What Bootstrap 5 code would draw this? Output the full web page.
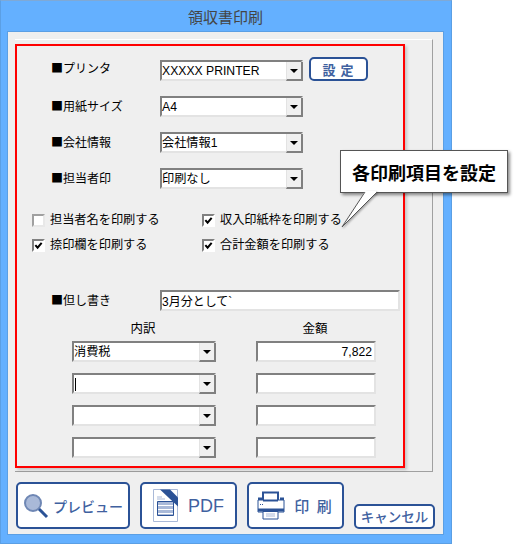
<!DOCTYPE html>
<html lang="ja">
<head>
    <meta charset="UTF-8">
    <meta name="viewport" content="width=device-width, initial-scale=1.0">
    <title>領収書印刷</title>
    <link href="https://cdn.jsdelivr.net/npm/bootstrap@5.3.0/dist/css/bootstrap.min.css" rel="stylesheet">
    <style>
        body {
            background: #fff;
            font-family: "Liberation Sans", "Noto Sans CJK JP", sans-serif;
            font-size: 12px;
            line-height: 1;
            color: #000;
        }
        .win {
            position: relative;
            width: 452px;
            height: 544px;
            background: #64b0ff;
            border: 1px solid #5b9fe4;
            border-top-color: #7fa9d6;
            padding: 0 7px 0 6px;
        }
        .win-title {
            height: 30px;
            font-family: "Noto Sans CJK JP", sans-serif;
            font-size: 15px;
            color: #444;
        }
        .client {
            height: 504px;
            background: #efefef;
            border: 1px solid #5b9fe4;
            padding: 7px 0 0 7px;
        }
        .frame {
            width: 418px;
            height: 433px;
            border-top: 1px solid #fff;
            border-right: 1px solid #a0a0a0;
            border-bottom: 1px solid #a0a0a0;
            padding-top: 4px;
        }
        .red-box {
            width: 390px;
            height: 424px;
            border: 2px solid #f00;
            box-shadow: 2px 2px 3px rgba(0, 0, 0, .18);
            padding-top: 14px;
        }
        .set-row { height: 21px; margin-bottom: 15px; padding-left: 34px; }
        .set-row-last { margin-bottom: 0; }
        .set-label { width: 109px; margin-top: 4px; font-family: "Noto Sans CJK JP", sans-serif; font-size: 12px; }
        .set-label-first { margin-top: 2px; }
        .combo {
            height: 21px;
            background: #fff;
            border-style: solid;
            border-width: 2px;
            border-color: #808080 #e3e3e3 #e3e3e3 #808080;
            padding-top: 2px;
            font-size: 12.2px;
        }
        .combo-wide { width: 143px; }
        .combo-small { width: 144px; }
        .combo-arrow {
            width: 17px;
            margin: -2px -2px -2px auto;
            background: #f0f0f0;
            border-right: 2px solid #808080;
            border-bottom: 2px solid #808080;
            border-left: 1px solid #e3e3e3;
        }
        .combo-arrow::after {
            content: "";
            border: 4px solid transparent;
            border-top: 4px solid #000;
            border-bottom: 0;
        }
        .caret-bar { width: 1px; height: 13px; margin-left: 1px; background: #000; }
        .btn-blue {
            background: #fff;
            border: 2px solid #2b5296;
            border-radius: 5px;
            color: #40619f;
            font-family: "Noto Sans CJK JP", sans-serif;
            font-weight: 500;
            padding: 0;
            line-height: 1;
        }
        .btn-blue:hover { background: #fff; border-color: #2b5296; color: #40619f; }
        .btn-set { width: 59px; height: 24px; margin: -3px 0 0 6px; font-size: 13px; font-weight: 700; letter-spacing: 1px; }
        .check-row { height: 12px; margin-bottom: 13px; padding-left: 15px; }
        .check-row-first { margin-top: 25px; }
        .check-col { width: 170px; }
        .check-col .form-check-input {
            width: 13px;
            height: 13px;
            margin: 0 5px 0 0;
            border: 2px solid;
            border-color: #a0a0a0 #e8e8e8 #e8e8e8 #a0a0a0;
            border-radius: 0;
            background-color: #fff;
            box-shadow: none;
            flex-shrink: 0;
        }
        .check-col .form-check-input:checked {
            background-color: #fff;
            border-color: #808080 #fff #fff #808080;
            background-size: 9px;
            background-image: url("data:image/svg+xml,%3csvg xmlns='http://www.w3.org/2000/svg' viewBox='0 0 10 10'%3e%3cpath fill='none' stroke='%23000' stroke-width='2.2' d='M1.500 4.500l2.500 3 4.500-5.500'/%3e%3c/svg%3e");
        }
        .check-text { margin-top: -2px; font-family: "Noto Sans CJK JP", sans-serif; font-size: 12.2px; }
        .note-row { height: 21px; margin-top: 39px; padding-left: 34px; }
        .note-box { width: 240px; font-size: 12px; }
        .head-row { margin-top: 9px; height: 21px; padding: 2px 0 0 54px; font-family: "Noto Sans CJK JP", sans-serif; font-size: 12.5px; }
        .head-left { width: 144px; margin-right: 40px; }
        .head-right { width: 120px; }
        .item-row { height: 21px; margin-bottom: 11px; padding-left: 55px; }
        .amount-box { width: 120px; margin-left: 40px; padding-right: 2px; }
        .foot { margin-top: 10px; padding-left: 1px; gap: 10px; align-items: flex-end; }
        .btn-big { height: 47px; font-size: 14px; gap: 4px; }
        .btn-preview { width: 114px; }
        .btn-pdf { width: 97px; font-family: "Liberation Sans", sans-serif; font-size: 18px; gap: 9px; }
        .btn-print { width: 97px; gap: 9px; font-size: 15px; letter-spacing: 2px; }
        .btn-cancel { width: 81px; height: 25px; font-size: 13.500px; }
        .callout {
            position: absolute;
            left: 339px;
            top: 149px;
            width: 168px;
            height: 43px;
            background: #fff;
            border: 1px solid #555;
            box-shadow: 2px 2px 3px rgba(0, 0, 0, .45);
            font-family: "Noto Sans CJK JP", sans-serif;
            font-weight: 700;
            font-size: 18px;
        }
        .callout-tail { position: absolute; left: 339px; top: 190px; filter: drop-shadow(1px 1px 1px rgba(0, 0, 0, .35)); }
    </style>
</head>
<body>
    <div class="win">
        <div class="win-title d-flex align-items-center justify-content-center">領収書印刷</div>
        <div class="client">
            <div class="frame">
                <div class="red-box">
                    <!-- プリンタ設定 -->
                    <div class="set-row d-flex">
                        <div class="set-label set-label-first">■プリンタ</div>
                        <div class="combo combo-wide d-flex align-items-center">
                            <span>XXXXX PRINTER</span>
                            <span class="combo-arrow align-self-stretch d-flex align-items-center justify-content-center"></span>
                        </div>
                        <button class="btn btn-blue btn-set" type="button">設 定</button>
                    </div>
                    <div class="set-row d-flex">
                        <div class="set-label">■用紙サイズ</div>
                        <div class="combo combo-wide d-flex align-items-center">
                            <span>A4</span>
                            <span class="combo-arrow align-self-stretch d-flex align-items-center justify-content-center"></span>
                        </div>
                    </div>
                    <div class="set-row d-flex">
                        <div class="set-label">■会社情報</div>
                        <div class="combo combo-wide d-flex align-items-center">
                            <span>会社情報1</span>
                            <span class="combo-arrow align-self-stretch d-flex align-items-center justify-content-center"></span>
                        </div>
                    </div>
                    <div class="set-row set-row-last d-flex">
                        <div class="set-label">■担当者印</div>
                        <div class="combo combo-wide d-flex align-items-center">
                            <span>印刷なし</span>
                            <span class="combo-arrow align-self-stretch d-flex align-items-center justify-content-center"></span>
                        </div>
                    </div>

                    <!-- チェック項目 -->
                    <div class="check-row check-row-first d-flex">
                        <label class="check-col d-flex align-items-center">
                            <input class="form-check-input" type="checkbox">
                            <span class="check-text">担当者名を印刷する</span>
                        </label>
                        <label class="check-col d-flex align-items-center">
                            <input class="form-check-input" type="checkbox" checked>
                            <span class="check-text">収入印紙枠を印刷する</span>
                        </label>
                    </div>
                    <div class="check-row d-flex">
                        <label class="check-col d-flex align-items-center">
                            <input class="form-check-input" type="checkbox" checked>
                            <span class="check-text">捺印欄を印刷する</span>
                        </label>
                        <label class="check-col d-flex align-items-center">
                            <input class="form-check-input" type="checkbox" checked>
                            <span class="check-text">合計金額を印刷する</span>
                        </label>
                    </div>

                    <!-- 但し書き -->
                    <div class="note-row d-flex">
                        <div class="set-label">■但し書き</div>
                        <div class="combo note-box d-flex align-items-center">3月分として`</div>
                    </div>

                    <!-- 内訳 -->
                    <div class="head-row d-flex">
                        <div class="head-left text-center">内訳</div>
                        <div class="head-right text-center">金額</div>
                    </div>
                    <div class="item-row d-flex">
                        <div class="combo combo-small d-flex align-items-center">
                            <span>消費税</span>
                            <span class="combo-arrow align-self-stretch d-flex align-items-center justify-content-center"></span>
                        </div>
                        <div class="combo amount-box d-flex align-items-center justify-content-end">7,822</div>
                    </div>
                    <div class="item-row d-flex">
                        <div class="combo combo-small d-flex align-items-center">
                            <span class="caret-bar"></span>
                            <span class="combo-arrow align-self-stretch d-flex align-items-center justify-content-center"></span>
                        </div>
                        <div class="combo amount-box"></div>
                    </div>
                    <div class="item-row d-flex">
                        <div class="combo combo-small d-flex align-items-center">
                            <span class="combo-arrow align-self-stretch d-flex align-items-center justify-content-center"></span>
                        </div>
                        <div class="combo amount-box"></div>
                    </div>
                    <div class="item-row d-flex">
                        <div class="combo combo-small d-flex align-items-center">
                            <span class="combo-arrow align-self-stretch d-flex align-items-center justify-content-center"></span>
                        </div>
                        <div class="combo amount-box"></div>
                    </div>
                </div>
            </div>

            <!-- ボタン -->
            <div class="foot d-flex">
                <button class="btn btn-blue btn-big btn-preview d-flex align-items-center justify-content-center" type="button">
                    <svg width="26" height="26" viewBox="0 0 26 26">
                        <circle cx="10" cy="10" r="8" fill="#a9b9d8" stroke="#6f87b4" stroke-width="2"/>
                        <path d="M16 16l8 8" stroke="#2b5296" stroke-width="3" fill="none"/>
                    </svg>
                    <span>プレビュー</span>
                </button>
                <button class="btn btn-blue btn-big btn-pdf d-flex align-items-center justify-content-center" type="button">
                    <svg width="26" height="33" viewBox="0 0 26 33">
                        <path d="M.5.5h24v32H.5z" fill="#fff" stroke="#a9b9d8"/>
                        <path d="M7 .5h10l8 8v9z" fill="#2b5296"/>
                        <path d="M4 8h5M4 10h8" stroke="#a9b9d8"/>
                        <path d="M4.500 12.500h16v14h-16z" fill="#a9b9d8" stroke="#2b5296"/>
                        <path d="M5 16.500h15M5 20.500h15M5 24.500h15" stroke="#fff"/>
                    </svg>
                    <span>PDF</span>
                </button>
                <button class="btn btn-blue btn-big btn-print d-flex align-items-center justify-content-center" type="button">
                    <svg width="28" height="29" viewBox="0 0 28 29">
                        <path d="M6 1.500h15v9H6z" fill="#fff" stroke="#2b5296" stroke-width="2"/>
                        <path d="M1 9h26v12H1z" fill="#fff" stroke="#2b5296"/>
                        <path d="M1 6.500h4V9H1zM23 6.500h4V9h-4z" fill="#2b5296"/>
                        <path d="M6 9h15v1.500H6z" fill="#2b5296"/>
                        <path d="M1 17.500h26v3H1z" fill="#2b5296"/>
                        <path d="M6 20.500h15v7.500H6z" fill="#fff" stroke="#2b5296"/>
                        <path d="M9 23h9M9 25h9" stroke="#a9b9d8"/>
                        <path d="M3 13.500h1M5 13.500h1" stroke="#2b5296"/>
                    </svg>
                    <span>印 刷</span>
                </button>
                <button class="btn btn-blue btn-cancel d-flex align-items-center justify-content-center" type="button">キャンセル</button>
            </div>
        </div>

        <!-- 吹き出し -->
        <div class="callout d-flex align-items-center justify-content-center">各印刷項目を設定</div>
        <svg class="callout-tail" width="40" height="40" viewBox="0 0 40 40">
            <path d="M25 0L2 36L37 1" fill="#fff"/>
            <path d="M25 1L2 36L37 1" fill="none" stroke="#555"/>
            <path d="M26 0h10v1.500H26z" fill="#fff"/>
        </svg>
    </div>
    <script src="https://cdn.jsdelivr.net/npm/bootstrap@5.3.0/dist/js/bootstrap.bundle.min.js"></script>
</body>
</html>
